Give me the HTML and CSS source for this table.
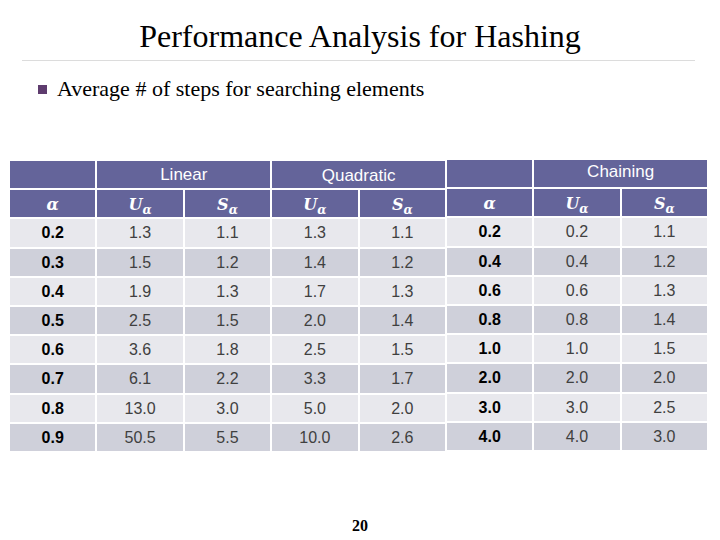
FILE: index.html
```html
<!DOCTYPE html>
<html>
<head>
<meta charset="utf-8">
<link rel="stylesheet" href="styles.css">
</head>
<body>
<div class="slide">
  <h1 class="title">Performance Analysis for Hashing</h1>
  <div class="rule"></div>
  <div class="bullet"><span class="sq"></span><span class="btext">Average # of steps for searching elements</span></div>
  <div class="tables">
    <div class="grid g5 left">
      <div class="hd"></div>
      <div class="hd span2">Linear</div>
      <div class="hd span2 quad">Quadratic</div>
      <div class="hd m"><i>α</i></div>
      <div class="hd m"><i>U<sub>α</sub></i></div>
      <div class="hd m"><i>S<sub>α</sub></i></div>
      <div class="hd m"><i>U<sub>α</sub></i></div>
      <div class="hd m"><i>S<sub>α</sub></i></div>

      <div class="c l b">0.2</div><div class="c l">1.3</div><div class="c l">1.1</div><div class="c l">1.3</div><div class="c l">1.1</div>
      <div class="c d b">0.3</div><div class="c d">1.5</div><div class="c d">1.2</div><div class="c d">1.4</div><div class="c d">1.2</div>
      <div class="c l b">0.4</div><div class="c l">1.9</div><div class="c l">1.3</div><div class="c l">1.7</div><div class="c l">1.3</div>
      <div class="c d b">0.5</div><div class="c d">2.5</div><div class="c d">1.5</div><div class="c d">2.0</div><div class="c d">1.4</div>
      <div class="c l b">0.6</div><div class="c l">3.6</div><div class="c l">1.8</div><div class="c l">2.5</div><div class="c l">1.5</div>
      <div class="c d b">0.7</div><div class="c d">6.1</div><div class="c d">2.2</div><div class="c d">3.3</div><div class="c d">1.7</div>
      <div class="c l b">0.8</div><div class="c l">13.0</div><div class="c l">3.0</div><div class="c l">5.0</div><div class="c l">2.0</div>
      <div class="c d b">0.9</div><div class="c d">50.5</div><div class="c d">5.5</div><div class="c d">10.0</div><div class="c d">2.6</div>
    </div>
    <div class="grid g3 right">
      <div class="hd"></div>
      <div class="hd span2 chain">Chaining</div>
      <div class="hd m"><i>α</i></div>
      <div class="hd m"><i>U<sub>α</sub></i></div>
      <div class="hd m"><i>S<sub>α</sub></i></div>

      <div class="c l b">0.2</div><div class="c l">0.2</div><div class="c l">1.1</div>
      <div class="c d b">0.4</div><div class="c d">0.4</div><div class="c d">1.2</div>
      <div class="c l b">0.6</div><div class="c l">0.6</div><div class="c l">1.3</div>
      <div class="c d b">0.8</div><div class="c d">0.8</div><div class="c d">1.4</div>
      <div class="c l b">1.0</div><div class="c l">1.0</div><div class="c l">1.5</div>
      <div class="c d b">2.0</div><div class="c d">2.0</div><div class="c d">2.0</div>
      <div class="c l b">3.0</div><div class="c l">3.0</div><div class="c l">2.5</div>
      <div class="c d b">4.0</div><div class="c d">4.0</div><div class="c d">3.0</div>
    </div>
  </div>
  <div class="pagenum">20</div>
</div>
</body>
</html>
```
FILE: styles.css
```css
html, body {
  margin: 0;
  padding: 0;
  background: #ffffff;
}
.slide {
  width: 720px;
  height: 540px;
  position: relative;
  overflow: hidden;
  font-family: "Liberation Serif", "Times New Roman", serif;
  color: #000;
}
.title {
  margin: 0;
  padding-top: 16px;
  font-size: 32px;
  line-height: 40px;
  font-weight: normal;
  text-align: center;
}
.rule {
  margin: 4px 25px 0 22px;
  height: 1px;
  background: #dcdcdc;
}
.bullet {
  display: flex;
  align-items: center;
  margin-top: 14px;
  padding-left: 38px;
  height: 28px;
}
.sq {
  width: 9px;
  height: 9px;
  background: #5e3c6e;
  margin-right: 10px;
}
.btext {
  font-size: 22px;
  line-height: 28px;
}
.tables {
  display: flex;
  align-items: flex-start;
  gap: 2px;
  margin-top: 57px;
  margin-left: 10px;
}
.grid {
  display: grid;
  gap: 2px;
  grid-auto-rows: 27.2px;
  font-family: "Liberation Sans", Arial, sans-serif;
}
.g5 {
  width: 435px;
  grid-template-columns: repeat(5, 1fr);
  margin-top: 1px;
}
.g3 {
  width: 260px;
  grid-template-columns: repeat(3, 1fr);
}
.hd {
  background: #64649a;
  color: #ffffff;
  font-size: 17px;
  display: flex;
  align-items: center;
  justify-content: center;
}
.span2 {
  grid-column: span 2;
}
.quad {
  padding-top: 3px;
}
.chain {
  padding-bottom: 3px;
}
.m {
  font-family: "DejaVu Serif", "Liberation Serif", serif;
  font-weight: bold;
  font-size: 16px;
  padding-top: 2px;
}
.m i {
  font-style: italic;
}
.m sub {
  font-size: 12px;
  vertical-align: -4px;
  line-height: 0;
}
.c {
  display: flex;
  align-items: center;
  justify-content: center;
  font-size: 16px;
  color: #404040;
  padding-top: 1px;
}
.l {
  background: #e8e8ed;
}
.d {
  background: #cfd0da;
}
.b {
  font-weight: bold;
  color: #000;
}
.pagenum {
  position: absolute;
  left: 0;
  right: 0;
  top: 516px;
  text-align: center;
  font-size: 16px;
  font-weight: bold;
  line-height: 20px;
}
```
